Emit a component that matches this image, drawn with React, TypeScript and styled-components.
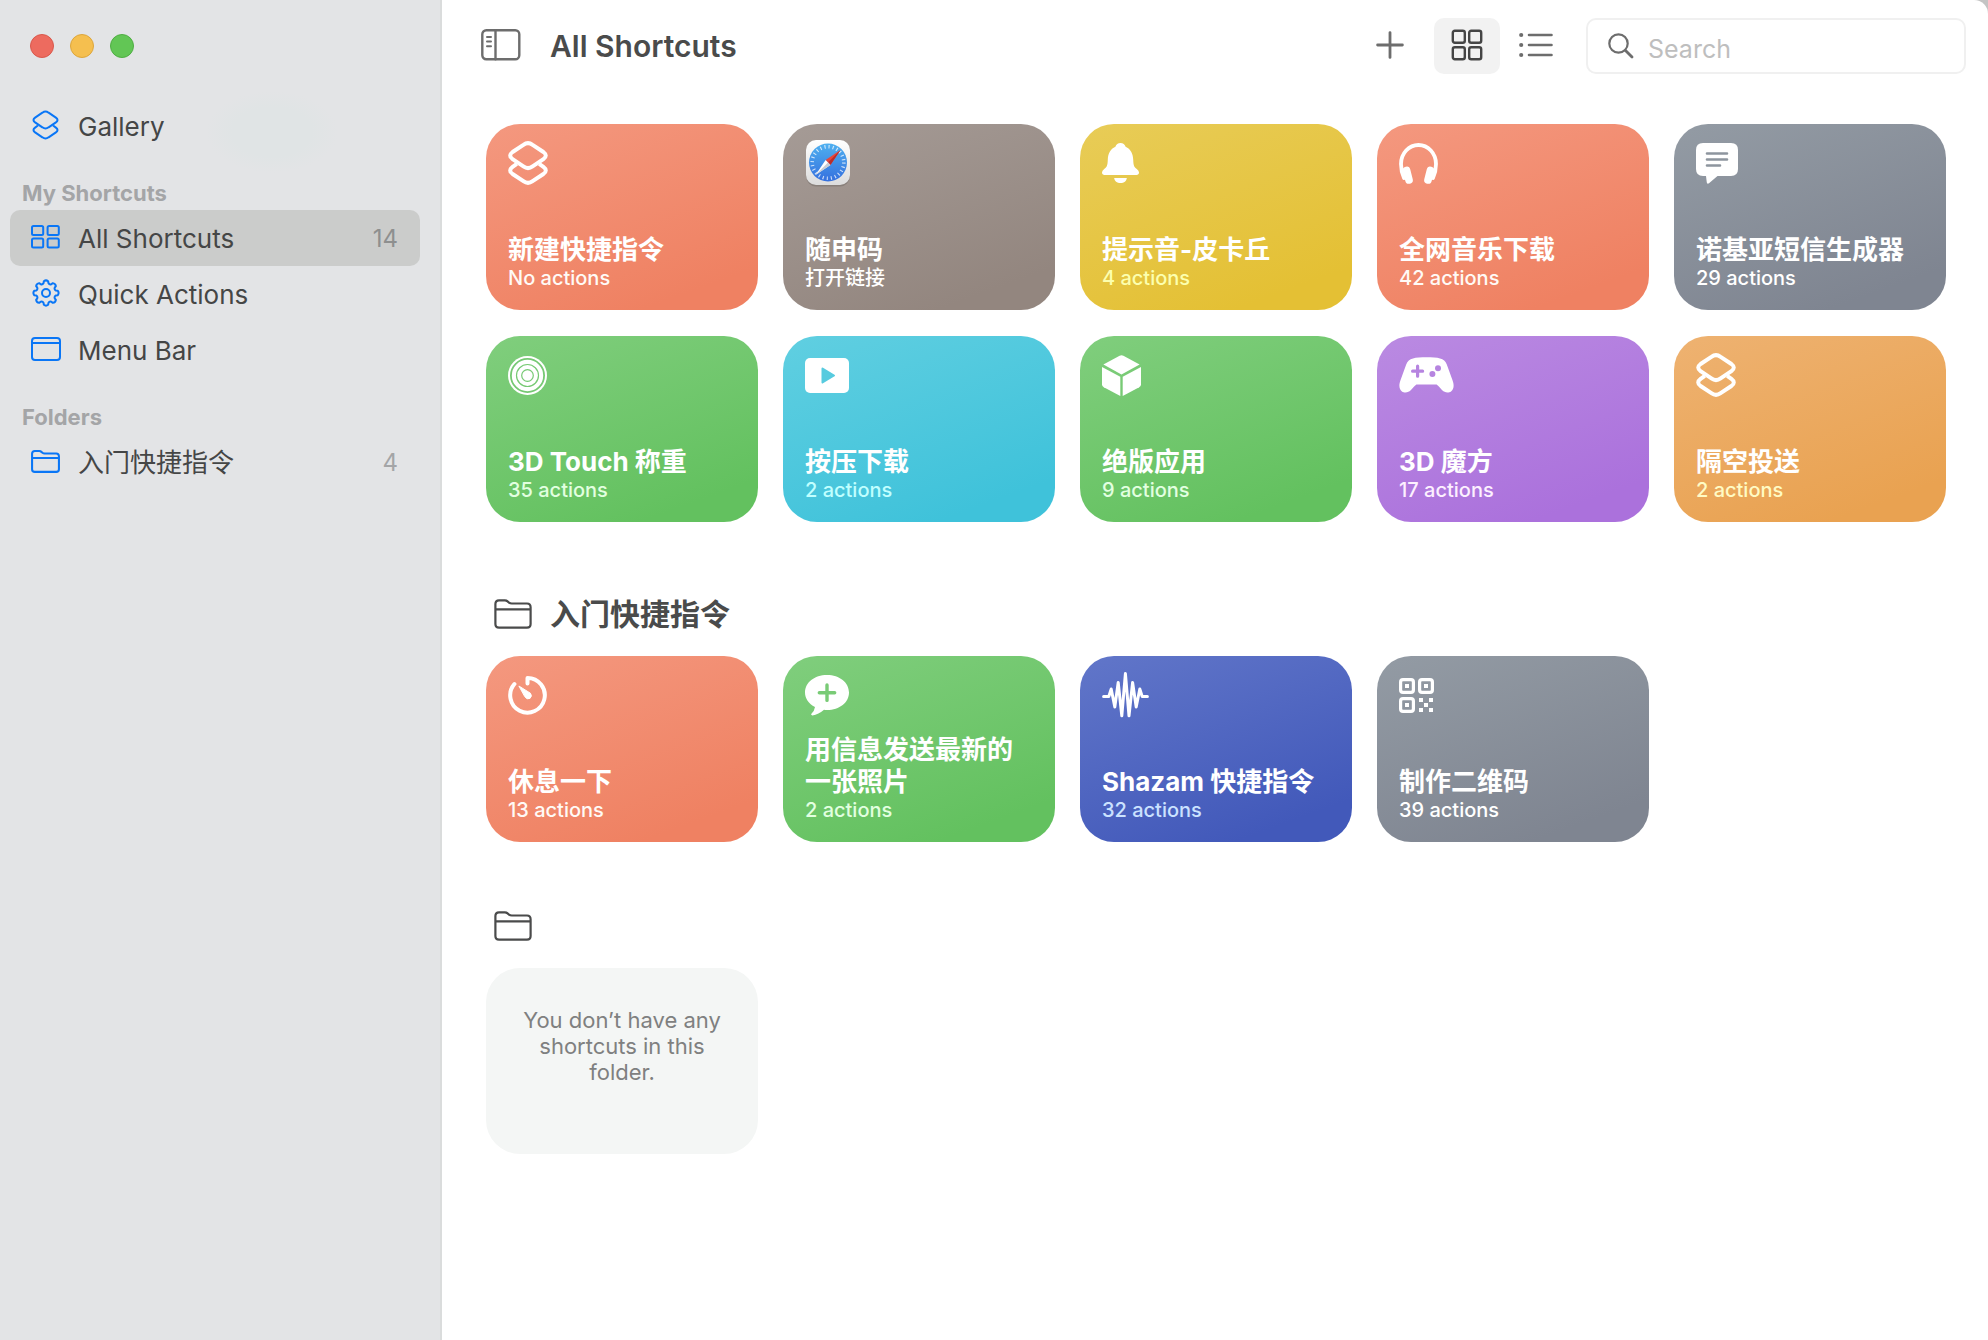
import React from "react";
import styled, { createGlobalStyle } from "styled-components";

const GlobalStyle = createGlobalStyle`
  * { box-sizing: border-box; }
  body {
    margin: 0;
    background: #ffffff;
    color: #454646;
    font-family: Inter, "Noto Sans CJK SC", sans-serif;
  }
  button, input { font: inherit; color: inherit; }
  h1, h2, p, ul { margin: 0; padding: 0; }
  svg { display: block; flex: none; }
`;

/* ---------- icons ---------- */

const ShortcutsIcon = ({ width, height, stroke }: { width: number; height: number; stroke: number }) => (
  <svg width={width} height={height} viewBox="0 0 40 44" fill="none" stroke="currentColor" strokeWidth={stroke} strokeLinejoin="round">
    <path d="M15.4 3.8 Q20 .4 24.6 3.8 L35.4 11 Q40.2 14.6 35.4 18.2 L24.6 25.4 Q20 28.8 15.4 25.4 L4.6 18.2 Q-.2 14.6 4.6 11 Z" />
    <path d="M8.8 22.8 L4.6 25.8 Q-.2 29.4 4.6 33 L15.4 40.2 Q20 43.6 24.6 40.2 L35.4 33 Q40.2 29.4 35.4 25.8 L31.2 22.8" />
  </svg>
);

const FolderIcon = ({ width, height, stroke }: { width: number; height: number; stroke: number }) => (
  <svg width={width} height={height} viewBox="0 0 38 30" fill="none" stroke="currentColor" strokeWidth={stroke}>
    <path d="M1.4 5 Q1.4 1.3 5 1.3 H10.8 Q12.4 1.3 13.6 2.4 L15 3.6 Q16.2 4.5 17.8 4.5 H33 Q36.6 4.5 36.6 8.2 V25 Q36.6 28.6 33 28.6 H5 Q1.4 28.6 1.4 25 Z M1.4 10.3 H36.6" />
  </svg>
);

const SmallGridIcon = () => (
  <svg width="29" height="24" viewBox="0 0 29 24" fill="none" stroke="currentColor" strokeWidth="2">
    {[[1, 1], [16.6, 1], [1, 13.6], [16.6, 13.6]].map(([x, y]) => (
      <rect key={`${x}-${y}`} x={x} y={y} width="11.2" height="9" rx="1.5" />
    ))}
  </svg>
);

const gearPath = (() => {
  const point = (radius: number, angle: number) =>
    `${(14 + radius * Math.sin(angle)).toFixed(2)} ${(14 - radius * Math.cos(angle)).toFixed(2)}`;
  const parts: string[] = [];
  for (let i = 0; i < 8; i++) {
    const a = (i * Math.PI) / 4;
    const next = a + Math.PI / 4;
    parts.push(
      `${i === 0 ? "M" : "L"}${point(12, a - 0.18)}`,
      `Q${point(13.4, a)} ${point(12, a + 0.18)}`,
      `L${point(10.2, a + 0.24)}`,
      `Q${point(8.8, (a + next) / 2)} ${point(10.2, next - 0.24)}`
    );
  }
  return parts.join(" ") + "Z";
})();

const GearIcon = () => (
  <svg width="28" height="28" viewBox="0 0 28 28" fill="none" stroke="currentColor" strokeWidth="2" strokeLinejoin="round">
    <path d={gearPath} />
    <circle cx="14" cy="14" r="4" />
  </svg>
);

const MenuBarIcon = () => (
  <svg width="30" height="24" viewBox="0 0 30 24" fill="none" stroke="currentColor" strokeWidth="2">
    <rect x="1" y="1" width="28" height="22" rx="3" />
    <path d="M1 6 H29" />
  </svg>
);

const SidebarIcon = () => (
  <svg width="40" height="32" viewBox="0 0 40 32" fill="none" stroke="currentColor" strokeWidth="2.4" strokeLinecap="round">
    <rect x="1.3" y="1.3" width="37" height="29" rx="4" />
    <path d="M14.5 1.3 V30.3" />
    <path d="M6 8 H10 M6 12.6 H10 M6 17.2 H10" strokeWidth="2" />
  </svg>
);

const PlusIcon = () => (
  <svg width="28" height="28" viewBox="0 0 28 28" stroke="currentColor" strokeWidth="2.8" strokeLinecap="round">
    <path d="M14 1.6 V26.4 M1.6 14 H26.4" />
  </svg>
);

const LargeGridIcon = () => (
  <svg width="32" height="32" viewBox="0 0 32 32" fill="none" stroke="currentColor" strokeWidth="2.4">
    {[[1.8, 1.8], [18.2, 1.8], [1.8, 18.2], [18.2, 18.2]].map(([x, y]) => (
      <rect key={`${x}-${y}`} x={x} y={y} width="12" height="12" rx="2" />
    ))}
  </svg>
);

const ListIcon = () => (
  <svg width="34" height="26" viewBox="0 0 34 26" fill="none" stroke="currentColor" strokeWidth="2.6" strokeLinecap="round">
    <path d="M10 3 H32.5 M10 13 H32.5 M10 23 H32.5" />
    <path d="M2.2 3 h.01 M2.2 13 h.01 M2.2 23 h.01" strokeWidth="4.2" />
  </svg>
);

const MagnifierIcon = () => (
  <svg width="26" height="26" viewBox="0 0 26 26" fill="none" stroke="currentColor" strokeLinecap="round">
    <circle cx="10.5" cy="10.5" r="9.2" strokeWidth="2.2" />
    <path d="M17.5 17.5 L24 24" strokeWidth="2.8" />
  </svg>
);

const SafariIcon = () => (
  <svg width="46" height="48" viewBox="0 0 46 48">
    <defs>
      <linearGradient id="safari-tile" x1="0" y1="0" x2="0" y2="1">
        <stop offset="0" stopColor="#ffffff" />
        <stop offset="1" stopColor="#dcdcdc" />
      </linearGradient>
      <linearGradient id="safari-dial" x1="0" y1="0" x2="0" y2="1">
        <stop offset="0" stopColor="#4fb0f0" />
        <stop offset="1" stopColor="#3570de" />
      </linearGradient>
    </defs>
    <rect x="1" y="2.4" width="44" height="45" rx="10" fill="#000" opacity=".14" />
    <rect x="1" y="1" width="44" height="45" rx="10" fill="url(#safari-tile)" />
    <circle cx="23" cy="23.5" r="19" fill="url(#safari-dial)" />
    <circle cx="23" cy="23.5" r="15.8" fill="none" stroke="#fff" strokeWidth="3.6" strokeDasharray="1.1 3.04" opacity=".75" />
    <path d="M35.5 11 L20.6 21.1 L25.4 25.9 Z" fill="#e8463c" />
    <path d="M35.5 11 L23 23.5 L25.4 25.9 Z" fill="#b92d2b" />
    <path d="M10.5 36 L20.6 21.1 L25.4 25.9 Z" fill="#ffffff" />
    <path d="M10.5 36 L23 23.5 L25.4 25.9 Z" fill="#c9ccd2" />
  </svg>
);

const BellIcon = () => (
  <svg width="37" height="40" viewBox="0 0 37 40" fill="currentColor">
    <path d="M18.5 0 C21 0 23 1.6 23.6 3.8 C28.6 6 31 10.6 31.2 16.5 C31.4 22.6 32 23.8 34.8 26 Q37 27.8 37 29.6 Q37 32 34.4 32 H2.6 Q0 32 0 29.6 Q0 27.8 2.2 26 C5 23.8 5.6 22.6 5.8 16.5 C6 10.6 8.4 6 13.4 3.8 C14 1.6 16 0 18.5 0 Z" />
    <path d="M12.2 35 H24.8 C24.6 38 22 40 18.5 40 S12.4 38 12.2 35 Z" />
  </svg>
);

const HeadphonesIcon = () => (
  <svg width="39" height="41" viewBox="0 0 39 41" fill="none" stroke="currentColor" strokeLinecap="round">
    <path d="M5 35 Q2 28.5 2 21 A17.5 19 0 0 1 37 21 Q37 28.5 34 35" strokeWidth="3.8" />
    <path d="M7.6 27.4 L10 37 M31.4 27.4 L29 37" strokeWidth="7.6" />
  </svg>
);

const MessageIcon = () => (
  <svg width="42" height="41" viewBox="0 0 42 41">
    <path d="M7 0 H35 Q42 0 42 7 V26 Q42 33 35 33 H21.5 L13 40.2 Q11.4 41.4 10.8 39.4 L10 33 H7 Q0 33 0 26 V7 Q0 0 7 0 Z" fill="currentColor" />
    <path d="M11 10.5 H31 M11 16.5 H31 M11 22.5 H24" stroke="#8d959e" strokeWidth="2.6" strokeLinecap="round" />
  </svg>
);

const RingsIcon = () => (
  <svg width="39" height="39" viewBox="0 0 39 39" fill="none" stroke="#76c973">
    <circle cx="19.5" cy="19.5" r="19.5" fill="#fff" stroke="none" />
    <circle cx="19.5" cy="19.5" r="16.6" strokeWidth="1.8" />
    <circle cx="19.5" cy="19.5" r="11" strokeWidth="1.2" />
    <circle cx="19.5" cy="19.5" r="5.8" strokeWidth="1.2" />
  </svg>
);

const PlayIcon = () => (
  <svg width="44" height="35" viewBox="0 0 44 35">
    <rect width="44" height="35" rx="5" fill="currentColor" />
    <path d="M17.5 10.5 L29 17.5 L17.5 24.5 Z" fill="#57cbdf" stroke="#57cbdf" strokeWidth="2" strokeLinejoin="round" />
  </svg>
);

const CubeIcon = () => (
  <svg width="39" height="41" viewBox="0 0 39 41" fill="currentColor">
    <path d="M17.6 .7 Q19.5 -.3 21.4 .7 L37.6 9.6 L19.5 19.4 L1.4 9.6 Z" />
    <path d="M0 12 L18.3 21.8 V41 L1.8 32.2 Q0 31.2 0 29.4 Z" />
    <path d="M39 12 L20.7 21.8 V41 L37.2 32.2 Q39 31.2 39 29.4 Z" />
  </svg>
);

const GameIcon = () => (
  <svg width="55" height="36" viewBox="0 0 55 36">
    <path d="M14 1.4 C20 0 35 0 41 1.4 Q46 2.6 47.8 7.4 L53.6 23.5 C57 33 51 35.6 48.6 35.6 C44 35.6 42.6 32 37.6 27.6 H17.4 C12.4 32 11 35.6 6.4 35.6 C4 35.6 -2 33 1.4 23.5 L7.2 7.4 Q9 2.6 14 1.4 Z" fill="currentColor" />
    <path d="M18.6 9.2 V19.2 M13.6 14.2 H23.6" stroke="#b684e0" strokeWidth="3.2" strokeLinecap="round" />
    <circle cx="39" cy="11.2" r="3" fill="#b684e0" />
    <circle cx="33.4" cy="17" r="3" fill="#b684e0" />
  </svg>
);

const TimerIcon = () => (
  <svg width="39" height="40" viewBox="0 0 39 40" fill="none" stroke="currentColor" strokeLinecap="round" strokeLinejoin="round">
    <path d="M19.5 8.6 V3 A17.3 17.3 0 1 1 6.4 9" strokeWidth="4" />
    <path d="M11.2 11.2 L22.4 18.2 Q24.6 21 22 23.4 Q19 25 17 22 Z" fill="currentColor" strokeWidth="1" />
  </svg>
);

const BubblePlusIcon = () => (
  <svg width="44" height="41" viewBox="0 0 44 41">
    <path d="M22 0 C34.6 0 44 7.6 44 17.5 S34.6 35 22 35 Q20.4 35 19 34.8 Q13.6 39.6 7.4 40.4 Q5.4 40.2 6.6 38.6 Q9.4 35.8 10 32 C3.6 28.6 0 23.6 0 17.5 C0 7.6 9.4 0 22 0 Z" fill="currentColor" />
    <path d="M22 10 V25.4 M14.3 17.7 H29.7" stroke="#79cb76" strokeWidth="3.4" strokeLinecap="round" />
  </svg>
);

const WaveIcon = () => (
  <svg width="47" height="46" viewBox="0 0 47 46" fill="none" stroke="currentColor" strokeWidth="3" strokeLinecap="round" strokeLinejoin="round">
    <path d="M1.6 24.5 H6.8 L9.2 17 L12.8 35 L16.2 10.5 L19.8 43.8 L23.4 1.6 L27 43.8 L30.6 10.5 L34.2 35 L37.8 17 L40.2 24.5 H45.4" />
  </svg>
);

const QrIcon = () => (
  <svg width="35" height="35" viewBox="0 0 35 35" fill="currentColor">
    {[[0, 0], [19, 0], [0, 19]].map(([x, y]) => (
      <g key={`${x}-${y}`}>
        <rect x={x + 1.6} y={y + 1.6} width="12.8" height="12.8" rx="2.4" fill="none" stroke="currentColor" strokeWidth="3.2" />
        <rect x={x + 6} y={y + 6} width="4" height="4" />
      </g>
    ))}
    {[[20, 20], [30, 20], [25, 25], [20, 30], [30, 30]].map(([x, y]) => (
      <rect key={`${x}-${y}`} x={x} y={y} width="4" height="4" />
    ))}
  </svg>
);

/* ---------- window ---------- */

const Window = styled.div`
  display: flex;
  min-height: 100vh;
  background: #c4c4c4;
`;

const Sidebar = styled.aside`
  flex: none;
  width: 442px;
  padding: 34px 20px 0 10px;
  border-right: 2px solid #dadcdc;
  background: radial-gradient(ellipse 66px 41px at 272px 132px, #e0e4e5 60%, #e3e4e6) #e3e4e6;
`;

const WindowControls = styled.div`
  display: flex;
  gap: 16px;
  padding: 0 20px;
  margin-bottom: 40px;
`;

const ControlDot = styled.button<{ $fill: string; $edge: string }>`
  width: 24px;
  height: 24px;
  padding: 0;
  border: 1px solid ${(p) => p.$edge};
  border-radius: 50%;
  background: ${(p) => p.$fill};
`;

const NavHeading = styled.h2`
  height: 56px;
  padding: 25px 12px 0;
  color: #a4a5a7;
  font-size: 22px;
  font-weight: 700;
  line-height: 28px;
`;

const NavItem = styled.button<{ $selected?: boolean }>`
  display: flex;
  align-items: center;
  gap: 17px;
  width: 100%;
  height: 56px;
  padding: 0 22px 0 20px;
  border: 0;
  border-radius: 10px;
  background: ${(p) => (p.$selected ? "#cbcccb" : "transparent")};
  font-size: 26px;
  line-height: 32px;
  text-align: left;
`;

const NavIcon = styled.span`
  display: flex;
  justify-content: center;
  width: 31px;
  padding-bottom: 2px;
  color: #0a76f6;
`;

const NavLabel = styled.span`
  padding-top: 2px;
`;

const NavCount = styled.span<{ $selected?: boolean }>`
  margin-left: auto;
  color: ${(p) => (p.$selected ? "#8e8f8f" : "#a4a5a7")};
  font-size: 24px;
  padding-top: 2px;
`;

const Main = styled.main`
  flex: 1;
  min-width: 0;
  border-top-right-radius: 14px;
  background: #ffffff;
`;

const Toolbar = styled.header`
  display: flex;
  align-items: center;
  height: 92px;
  padding: 0 22px 0 39px;
`;

const ToolButton = styled.button<{ $active?: boolean }>`
  display: grid;
  place-items: center;
  width: 66px;
  height: 56px;
  padding: 0 0 2px;
  border: 0;
  border-radius: 10px;
  background: ${(p) => (p.$active ? "#f2f2f2" : "transparent")};
  color: ${(p) => (p.$active ? "#454545" : "#6d6d6d")};
`;

const SidebarToggle = styled(ToolButton)`
  width: 40px;
`;

const PageTitle = styled.h1`
  margin: 0 auto 0 29px;
  color: #4a4b4b;
  font-size: 30px;
  font-weight: 600;
  line-height: 40px;
`;

const ToolGroup = styled.div`
  display: flex;
  gap: 11px;
  margin-right: 17px;
`;

const ViewSwitch = styled.div`
  display: flex;
  gap: 3px;
`;

const SearchBox = styled.label`
  display: flex;
  align-items: center;
  gap: 14px;
  width: 380px;
  height: 56px;
  padding: 0 20px;
  border: 2px solid #f0f0f0;
  border-radius: 10px;
  color: #6d6d6d;
`;

const SearchInput = styled.input`
  flex: 1;
  min-width: 0;
  padding: 5px 0 0;
  border: 0;
  outline: 0;
  background: transparent;
  font-size: 25px;
  line-height: 32px;
  &::placeholder { color: #bebebe; opacity: 1; }
`;

const Content = styled.div`
  padding: 32px 42px 40px 44px;
`;

const Section = styled.section<{ $gap: number }>`
  margin-top: ${(p) => p.$gap}px;
`;

const SectionHeading = styled.h2`
  display: flex;
  align-items: center;
  gap: 18px;
  height: 44px;
  margin-bottom: 20px;
  padding-left: 8px;
  color: #4a4b4b;
  font-size: 30px;
  font-weight: 600;
  line-height: 44px;
`;

const CardGrid = styled.div`
  display: grid;
  grid-template-columns: repeat(auto-fill, minmax(272px, 1fr));
  gap: 26px 25px;
`;

const Card = styled.button<{ $from: string; $to: string }>`
  display: flex;
  flex-direction: column;
  height: 186px;
  padding: 15px 22px 20px;
  border: 0;
  border-radius: 34px;
  background: linear-gradient(160deg, ${(p) => p.$from}, ${(p) => p.$to} 85%);
  color: #ffffff;
  text-align: left;
`;

const CardIcon = styled.span`
  display: flex;
  align-items: center;
  height: 48px;
`;

const CardTitle = styled.span`
  margin-top: auto;
  font-size: 26px;
  font-weight: 700;
  line-height: 32px;
`;

const CardDetail = styled.span<{ $tint: string }>`
  color: ${(p) => p.$tint};
  font-size: 20px;
  font-weight: 500;
  line-height: 24px;
`;

const EmptyCard = styled.p`
  height: 186px;
  padding: 39px 32px;
  border-radius: 34px;
  background: #f4f6f5;
  color: #7f8080;
  font-size: 22px;
  line-height: 26px;
  text-align: center;
`;

/* ---------- data ---------- */

const colors = {
  red: { from: "#f4987f", to: "#ef8162", tint: "#fffaf6" },
  brown: { from: "#a59b96", to: "#93867f", tint: "#ffffff" },
  yellow: { from: "#e8cc57", to: "#e4c034", tint: "#fcffae" },
  slate: { from: "#939ba4", to: "#7f8591", tint: "#ffffff" },
  green: { from: "#80ce7d", to: "#63c15f", tint: "#e2ffe0" },
  cyan: { from: "#60cfe1", to: "#3fc2da", tint: "#c0ffff" },
  purple: { from: "#ba8ae2", to: "#ab71dc", tint: "#fdf0ff" },
  orange: { from: "#eeb271", to: "#e9a251", tint: "#fffbc4" },
  blue: { from: "#6176c9", to: "#4259ba", tint: "#cbe2ff" },
};

type Shortcut = { title: string; detail: string; color: keyof typeof colors; icon: React.ReactNode };

const shortcutGlyph = <ShortcutsIcon width={40} height={44} stroke={4} />;

const allShortcuts: Shortcut[] = [
  { title: "新建快捷指令", detail: "No actions", color: "red", icon: shortcutGlyph },
  { title: "随申码", detail: "打开链接", color: "brown", icon: <SafariIcon /> },
  { title: "提示音-皮卡丘", detail: "4 actions", color: "yellow", icon: <BellIcon /> },
  { title: "全网音乐下载", detail: "42 actions", color: "red", icon: <HeadphonesIcon /> },
  { title: "诺基亚短信生成器", detail: "29 actions", color: "slate", icon: <MessageIcon /> },
  { title: "3D Touch 称重", detail: "35 actions", color: "green", icon: <RingsIcon /> },
  { title: "按压下载", detail: "2 actions", color: "cyan", icon: <PlayIcon /> },
  { title: "绝版应用", detail: "9 actions", color: "green", icon: <CubeIcon /> },
  { title: "3D 魔方", detail: "17 actions", color: "purple", icon: <GameIcon /> },
  { title: "隔空投送", detail: "2 actions", color: "orange", icon: shortcutGlyph },
];

const starterShortcuts: Shortcut[] = [
  { title: "休息一下", detail: "13 actions", color: "red", icon: <TimerIcon /> },
  { title: "用信息发送最新的一张照片", detail: "2 actions", color: "green", icon: <BubblePlusIcon /> },
  { title: "Shazam 快捷指令", detail: "32 actions", color: "blue", icon: <WaveIcon /> },
  { title: "制作二维码", detail: "39 actions", color: "slate", icon: <QrIcon /> },
];

const Shortcuts = ({ items }: { items: Shortcut[] }) => (
  <CardGrid>
    {items.map(({ title, detail, color, icon }) => (
      <Card key={title} $from={colors[color].from} $to={colors[color].to}>
        <CardIcon>{icon}</CardIcon>
        <CardTitle>{title}</CardTitle>
        <CardDetail $tint={colors[color].tint}>{detail}</CardDetail>
      </Card>
    ))}
  </CardGrid>
);

const headingFolder = <FolderIcon width={38} height={30} stroke={2.2} />;

export default function App() {
  return (
    <>
      <GlobalStyle />
      <Window>
        <Sidebar>
          <WindowControls>
            <ControlDot aria-label="Close" $fill="#ed6b5f" $edge="#d9584c" />
            <ControlDot aria-label="Minimize" $fill="#f5bf4f" $edge="#dda63c" />
            <ControlDot aria-label="Zoom" $fill="#62c655" $edge="#4fae43" />
          </WindowControls>
          <nav>
            <NavItem>
              <NavIcon><ShortcutsIcon width={27} height={30} stroke={3} /></NavIcon>
              <NavLabel>Gallery</NavLabel>
            </NavItem>
            <NavHeading>My Shortcuts</NavHeading>
            <NavItem $selected aria-current="page">
              <NavIcon><SmallGridIcon /></NavIcon>
              <NavLabel>All Shortcuts</NavLabel>
              <NavCount $selected>14</NavCount>
            </NavItem>
            <NavItem>
              <NavIcon><GearIcon /></NavIcon>
              <NavLabel>Quick Actions</NavLabel>
            </NavItem>
            <NavItem>
              <NavIcon><MenuBarIcon /></NavIcon>
              <NavLabel>Menu Bar</NavLabel>
            </NavItem>
            <NavHeading>Folders</NavHeading>
            <NavItem>
              <NavIcon><FolderIcon width={29} height={23} stroke={2.7} /></NavIcon>
              <NavLabel>入门快捷指令</NavLabel>
              <NavCount>4</NavCount>
            </NavItem>
          </nav>
        </Sidebar>
        <Main>
          <Toolbar>
            <SidebarToggle aria-label="Toggle sidebar"><SidebarIcon /></SidebarToggle>
            <PageTitle>All Shortcuts</PageTitle>
            <ToolGroup>
              <ToolButton aria-label="New shortcut"><PlusIcon /></ToolButton>
              <ViewSwitch role="group" aria-label="View">
                <ToolButton $active aria-label="Grid view" aria-pressed="true"><LargeGridIcon /></ToolButton>
                <ToolButton aria-label="List view" aria-pressed="false"><ListIcon /></ToolButton>
              </ViewSwitch>
            </ToolGroup>
            <SearchBox>
              <MagnifierIcon />
              <SearchInput type="text" placeholder="Search" aria-label="Search" />
            </SearchBox>
          </Toolbar>
          <Content>
            <Shortcuts items={allShortcuts} />
            <Section $gap={70}>
              <SectionHeading>{headingFolder}入门快捷指令</SectionHeading>
              <Shortcuts items={starterShortcuts} />
            </Section>
            <Section $gap={62}>
              <SectionHeading aria-label="Untitled folder">{headingFolder}</SectionHeading>
              <CardGrid>
                <EmptyCard>You don’t have any shortcuts in this folder.</EmptyCard>
              </CardGrid>
            </Section>
          </Content>
        </Main>
      </Window>
    </>
  );
}
